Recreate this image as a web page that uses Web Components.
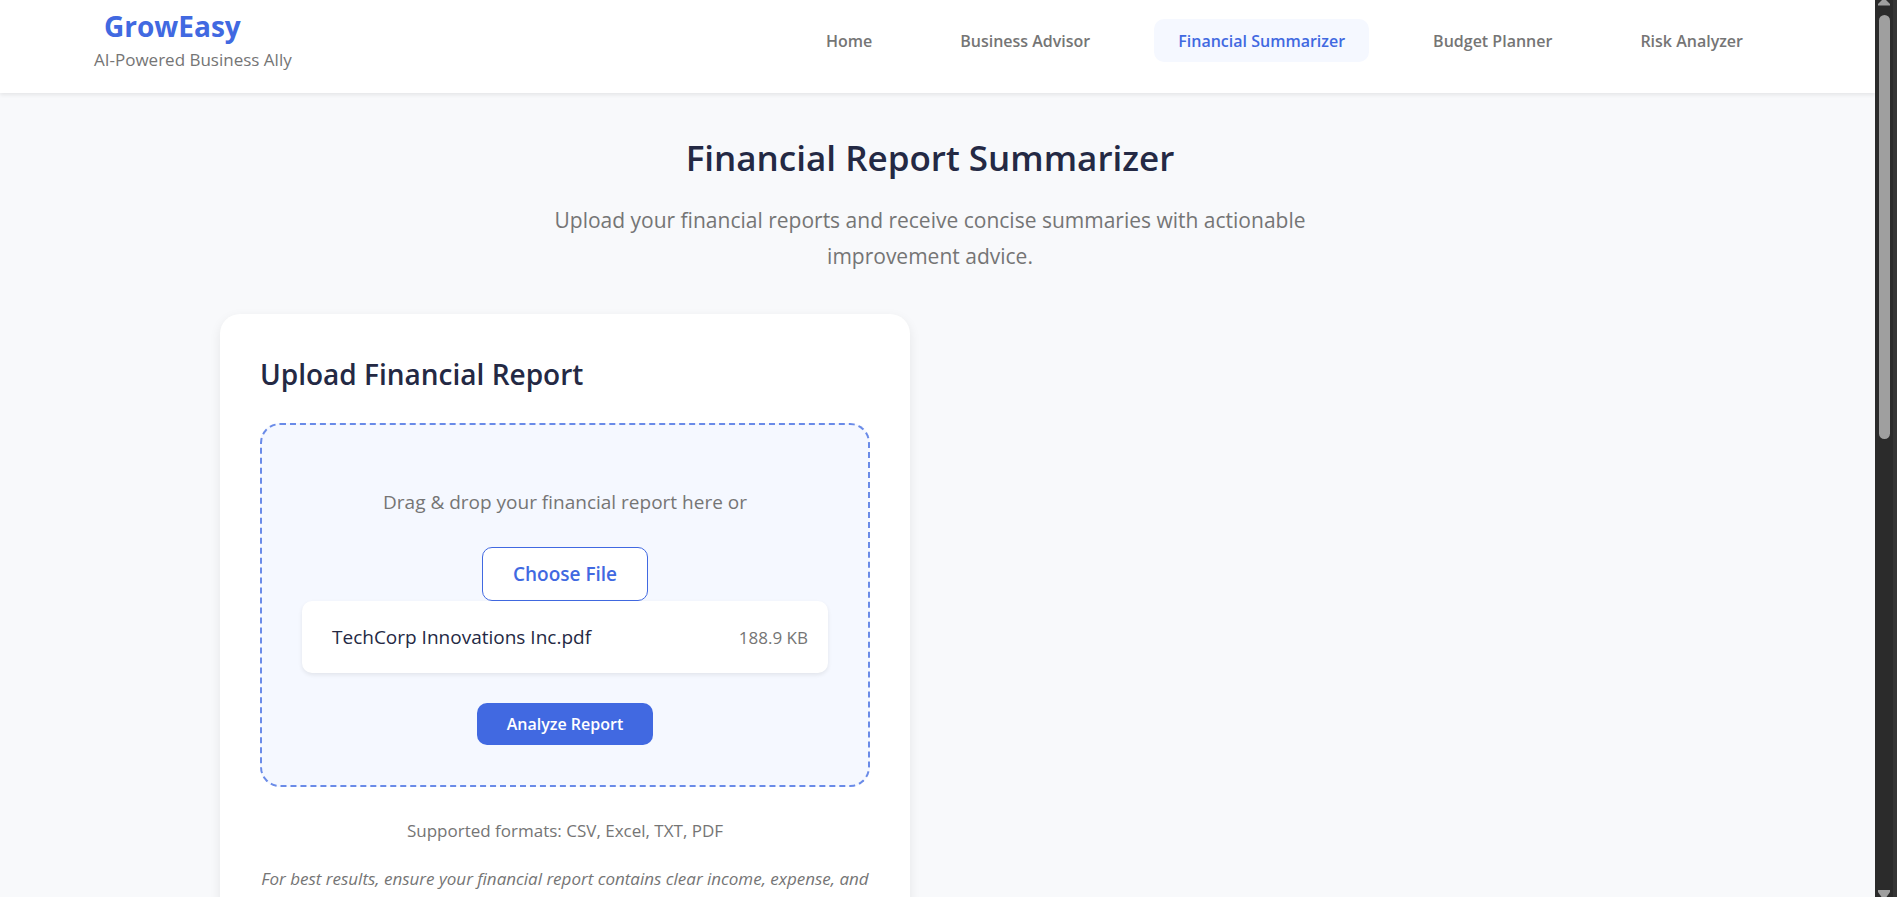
<!DOCTYPE html>
<html lang="en">
<head>
<meta charset="utf-8">
<meta name="viewport" content="width=device-width, initial-scale=1">
<title>GrowEasy – Financial Report Summarizer</title>
<style>
  :root {
    --primary: #4169e1;
    --primary-soft: #6a8be8;
    --tint: #f5f8ff;
    --ink: #242944;
    --muted: #757575;
    --surface: #ffffff;
    --page: #f8f9fb;
  }
  html, body { margin: 0; height: 100%; }
  body {
    overflow: hidden;
    background: var(--page);
    color: var(--ink);
    font: 400 17px/27px "Open Sans", "Noto Sans", sans-serif;
  }
</style>
</head>
<body>
<app-shell>
  <site-header slot="header">
    <nav-link href="#home">Home</nav-link>
    <nav-link href="#advisor">Business Advisor</nav-link>
    <nav-link href="#summarizer" active>Financial Summarizer</nav-link>
    <nav-link href="#budget">Budget Planner</nav-link>
    <nav-link href="#risk">Risk Analyzer</nav-link>
  </site-header>
  <page-intro>
    <span slot="title">Financial Report Summarizer</span>
    Upload your financial reports and receive concise summaries with actionable improvement advice.
  </page-intro>
  <card-grid>
    <upload-card>
      <span slot="title">Upload Financial Report</span>
      <drop-zone>
        <file-row slot="file" name="TechCorp Innovations Inc.pdf" size="188.9 KB"></file-row>
      </drop-zone>
      <span slot="formats">Supported formats: CSV, Excel, TXT, PDF</span>
      <span slot="hint">For best results, ensure your financial report contains clear income, expense, and</span>
    </upload-card>
  </card-grid>
</app-shell>

<script>
  const define = (name, html, setup) => {
    const template = document.createElement('template');
    template.innerHTML = html;
    customElements.define(name, class extends HTMLElement {
      constructor() {
        super();
        this.attachShadow({ mode: 'open' }).append(template.content.cloneNode(true));
      }
      connectedCallback() {
        if (setup) setup(this, this.shadowRoot);
      }
    });
  };

  define('app-shell', `
    <style>
      :host { display: flex; height: 100vh; overflow: hidden; }
      .view { flex: 1; min-width: 0; overflow: hidden; }
      main { padding: 41px 15px 40px 0; }
    </style>
    <div class="view">
      <slot name="header"></slot>
      <main><slot></slot></main>
    </div>
    <scroll-rail></scroll-rail>`);

  define('scroll-rail', `
    <style>
      :host {
        display: flex; flex-direction: column; align-items: center;
        box-sizing: border-box; width: 22px; padding-right: 4px;
        background: linear-gradient(to right, #2b2b2b 18px, #353535 18px);
      }
      svg { display: block; flex: none; fill: #9f9f9f; }
      .track { flex: 1; align-self: stretch; padding: 9px 3px 0 4px; }
      .thumb { height: 48.5%; border-radius: 6px; background: #9f9f9f; }
    </style>
    <svg width="12" height="6" viewBox="0 0 12 6"><path d="M4 0h4l4 4v1.500H0V4z"/></svg>
    <div class="track"><div class="thumb"></div></div>
    <svg width="12" height="7" viewBox="0 0 12 7"><path d="M0 0h12v2L8.500 7h-5L0 2z"/></svg>`);

  define('site-header', `
    <style>
      :host { display: block; position: relative; background: var(--surface); box-shadow: 0 2px 4px rgba(0, 0, 0, .08); }
      header {
        display: flex; justify-content: space-between; align-items: flex-start;
        padding: 6px 108px 20px 94px;
      }
      .logo { display: block; padding-left: 10px; color: var(--primary); font-size: 28px; line-height: 40px; font-weight: 700; text-decoration: none; }
      .tagline { margin: 0; color: var(--muted); font-size: 17px; line-height: 27px; }
      nav { display: flex; gap: 40px; padding-top: 13px; }
    </style>
    <header>
      <div>
        <a class="logo" href="#home">GrowEasy</a>
        <p class="tagline">AI-Powered Business Ally</p>
      </div>
      <nav><slot></slot></nav>
    </header>`);

  define('nav-link', `
    <style>
      :host { display: block; }
      a {
        display: block; padding: 9px 24px 7px; border-radius: 10px;
        color: var(--muted); font-size: 16px; line-height: 27px; font-weight: 600;
        text-decoration: none; white-space: nowrap;
      }
      :host([active]) a { background: var(--tint); color: var(--primary); }
    </style>
    <a><slot></slot></a>`,
    (host, root) => { root.querySelector('a').href = host.getAttribute('href'); });

  define('page-intro', `
    <style>
      :host { display: block; text-align: center; }
      h1 { margin: 0 0 20px; font-size: 35px; line-height: 48px; font-weight: 600; }
      p { max-width: 800px; margin: 0 auto 40px; color: var(--muted); font-size: 21px; line-height: 36px; }
    </style>
    <h1><slot name="title"></slot></h1>
    <p><slot></slot></p>`);

  define('card-grid', `
    <style>
      :host {
        display: grid; grid-template-columns: 1fr 1fr; gap: 40px;
        max-width: 1420px; margin: 0 auto;
      }
    </style>
    <slot></slot>`);

  define('upload-card', `
    <style>
      :host {
        display: block; padding: 40px; border-radius: 20px;
        background: var(--surface); box-shadow: 0 4px 12px rgba(0, 0, 0, .08);
      }
      h2 { margin: 0 0 29px; font-size: 28px; line-height: 40px; font-weight: 600; }
      p { margin: 0; color: var(--muted); text-align: center; }
      .formats { margin: 30px 0 21px; }
      .hint { font-style: italic; }
    </style>
    <h2><slot name="title"></slot></h2>
    <slot></slot>
    <p class="formats"><slot name="formats"></slot></p>
    <p class="hint"><slot name="hint"></slot></p>`);

  define('drop-zone', `
    <style>
      :host {
        display: flex; flex-direction: column; align-items: center;
        padding: 60px 40px 40px; border: 2px dashed var(--primary-soft);
        border-radius: 20px; background: var(--tint);
      }
      p { margin: 0 0 28px; color: var(--muted); font-size: 19px; line-height: 34px; }
      button { font-family: inherit; font-weight: 600; border-radius: 10px; cursor: pointer; }
      .choose {
        padding: 10px 30px; border: 1px solid var(--primary);
        background: var(--surface); color: var(--primary); font-size: 19px; line-height: 32px;
      }
      .analyze {
        margin-top: 30px; padding: 8px 30px; border: 0;
        background: var(--primary); color: var(--surface); font-size: 16px; line-height: 26px;
      }
    </style>
    <p>Drag &amp; drop your financial report here or</p>
    <button class="choose" type="button">Choose File</button>
    <slot name="file"></slot>
    <button class="analyze" type="button">Analyze Report</button>`);

  define('file-row', `
    <style>
      :host {
        display: flex; justify-content: space-between; align-items: center; align-self: stretch;
        padding: 20px 20px 20px 30px; border-radius: 10px;
        background: var(--surface); box-shadow: 0 2px 4px rgba(0, 0, 0, .08);
      }
      .name { font-size: 19px; line-height: 32px; }
      .size { color: var(--muted); font-size: 17px; line-height: 27px; }
    </style>
    <span class="name"></span>
    <span class="size"></span>`,
    (host, root) => {
      root.querySelector('.name').textContent = host.getAttribute('name');
      root.querySelector('.size').textContent = host.getAttribute('size');
    });
</script>
</body>
</html>
